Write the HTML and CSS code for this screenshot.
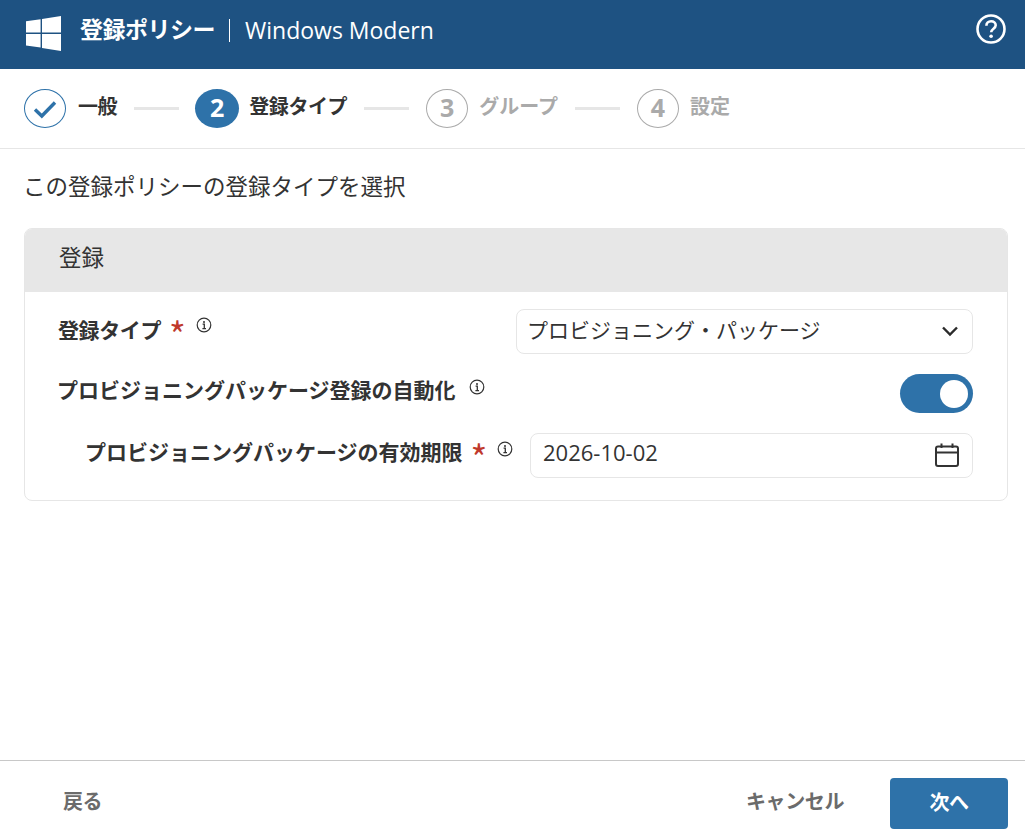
FILE: index.html
```html
<!DOCTYPE html>
<html lang="ja">
<head>
<meta charset="utf-8">
<title>登録ポリシー</title>
<link rel="stylesheet" href="styles.css">
</head>
<body>
<div class="page">
  <header class="topbar">
    <svg class="logo" width="35" height="35" viewBox="0 0 35 35"><path fill="#fff" d="M0 5.300 14.600 3.200V16.600H0ZM16 3 35 0V16.600H16ZM0 18H14.600V31.600L0 29.600ZM16 18H35V35L16 31.900Z"/></svg>
    <span class="topbar-title">登録ポリシー</span>
    <span class="topbar-sub">Windows Modern</span>
    <svg class="help" width="30" height="30" viewBox="0 0 30 30" fill="none"><circle cx="15" cy="15" r="13.500" stroke="#fff" stroke-width="2.600"/><path d="M10.400 11.700c0-2.700 2-4.400 4.700-4.400s4.600 1.700 4.600 4c0 3.400-4.500 3.400-4.500 7" stroke="#fff" stroke-width="2.600"/><circle cx="15.100" cy="22.300" r="1.800" fill="#fff"/></svg>
  </header>

  <nav class="stepper">
    <div class="step">
      <span class="badge badge-done"><svg width="26" height="20" viewBox="0 0 26 20" fill="none"><path d="M3 10.500 9.800 17 23 3.500" stroke="#2e72a9" stroke-width="3.400"/></svg></span>
      <span class="step-label step-label-first">一般</span>
    </div>
    <span class="connector"></span>
    <div class="step">
      <span class="badge badge-active">2</span>
      <span class="step-label">登録タイプ</span>
    </div>
    <span class="connector"></span>
    <div class="step">
      <span class="badge badge-todo">3</span>
      <span class="step-label step-label-todo">グループ</span>
    </div>
    <span class="connector"></span>
    <div class="step">
      <span class="badge badge-todo">4</span>
      <span class="step-label step-label-todo">設定</span>
    </div>
  </nav>

  <main class="content">
    <h2 class="lead">この登録ポリシーの登録タイプを選択</h2>
    <section class="card">
      <h3 class="card-head">登録</h3>
      <div class="card-body">
        <div class="row row-type">
          <div class="label"><b>登録タイプ</b><span class="req">*</span><svg class="info" width="16" height="16" viewBox="0 0 16 16" fill="none"><circle cx="8" cy="8" r="6.800" stroke="#333" stroke-width="1.200"/><path d="M6.600 7.200H8.300V11.600M6.400 11.600H10" stroke="#333" stroke-width="1.300"/><circle cx="8" cy="4.900" r="1" fill="#333"/></svg></div>
          <div class="field field-select">
            <span>プロビジョニング・パッケージ</span>
            <svg width="18" height="12" viewBox="0 0 18 12" fill="none"><path d="M2 2.500 9 9.500 16 2.500" stroke="#2b2b2b" stroke-width="2.400"/></svg>
          </div>
        </div>
        <div class="row row-auto">
          <div class="label"><b>プロビジョニングパッケージ登録の自動化</b><svg class="info" width="16" height="16" viewBox="0 0 16 16" fill="none"><circle cx="8" cy="8" r="6.800" stroke="#333" stroke-width="1.200"/><path d="M6.600 7.200H8.300V11.600M6.400 11.600H10" stroke="#333" stroke-width="1.300"/><circle cx="8" cy="4.900" r="1" fill="#333"/></svg></div>
          <span class="toggle"><span class="knob"></span></span>
        </div>
        <div class="row row-expiry">
          <div class="label"><b>プロビジョニングパッケージの有効期限</b><span class="req">*</span><svg class="info" width="16" height="16" viewBox="0 0 16 16" fill="none"><circle cx="8" cy="8" r="6.800" stroke="#333" stroke-width="1.200"/><path d="M6.600 7.200H8.300V11.600M6.400 11.600H10" stroke="#333" stroke-width="1.300"/><circle cx="8" cy="4.900" r="1" fill="#333"/></svg></div>
          <div class="field field-date">
            <span>2026-10-02</span>
            <svg width="26" height="26" viewBox="0 0 26 26" fill="none"><rect x="2" y="4.500" width="22" height="19.500" rx="2" stroke="#333" stroke-width="2"/><path d="M2 10.500H24M7.500 1.500V6M18.500 1.500V6" stroke="#333" stroke-width="2"/></svg>
          </div>
        </div>
      </div>
    </section>
  </main>

  <footer class="footer">
    <button class="btn btn-text btn-back">戻る</button>
    <div class="footer-right">
      <button class="btn btn-text btn-cancel">キャンセル</button>
      <button class="btn btn-primary">次へ</button>
    </div>
  </footer>
</div>
</body>
</html>
```
FILE: styles.css
```css
* { box-sizing: border-box; }
html, body { margin: 0; height: 100%; }
body { font-family: "Open Sans", "Noto Sans CJK JP", sans-serif; color: #333; background: #fff; }
.page { display: flex; flex-direction: column; height: 831px; width: 1025px; overflow: hidden; }

.topbar { height: 69px; background: #1e5282; color: #fff; display: flex; align-items: center; padding: 0 19px 9px 26px; flex: none; }
.logo { flex: none; margin: 7px 19px 0 0; }
.topbar-title { font-size: 23px; font-weight: 700; line-height: 30px; letter-spacing: -0.5px; padding: 0 14px 2px 0; border-right: 1px solid #fff; height: 23px; display: flex; align-items: center; }
.topbar-sub { font-size: 23px; line-height: 30px; margin-left: 15px; }
.help { margin-left: auto; margin-top: -3px; }

.stepper { height: 80px; border-bottom: 1px solid #e6e6e6; display: flex; align-items: center; padding: 0 0 0 24px; flex: none; }
.step { display: flex; align-items: center; }
.badge { width: 42px; height: 39px; border-radius: 50%; display: flex; align-items: center; justify-content: center; font-size: 25px; font-weight: 700; padding-bottom: 3px; flex: none; }
.badge-done { border: 1px solid #2e72a9; padding-bottom: 0; }
.badge-active { background: #2e72a9; color: #fff; width: 44px; }
.badge-todo { border: 1px solid #aaa; color: #aaa; margin-left: 1px; }
.step-label { font-size: 20px; font-weight: 700; margin: -6px 0 0 10px; letter-spacing: -0.4px; color: #333; }
.step-label-first { margin-left: 12px; }
.step-label-todo { color: #aaa; letter-spacing: 0; margin-left: 11px; }
.connector { width: 45px; height: 3px; background: #e6e6e6; margin: 0 16px 0 17px; }

.content { flex: 1; padding: 22px 17px 0 24px; }
.lead { font-size: 22.500px; font-weight: 400; line-height: 32px; margin: 0 0 25px -1px; }
.card { border: 1px solid #e6e6e6; border-radius: 8px; height: 273px; overflow: hidden; }
.card-head { background: #e7e7e7; height: 64px; margin: -1px -1px 0; padding: 0 0 7px 35px; display: flex; align-items: center; font-size: 22.500px; font-weight: 400; }
.card-body { padding: 17px 34px 0 33px; display: flex; flex-direction: column; }
.row { display: flex; align-items: center; justify-content: space-between; }
.row-type { height: 45px; }
.row-auto { height: 39px; margin-top: 20px; }
.row-expiry { height: 45px; margin-top: 20px; padding-left: 27px; }
.label { display: flex; align-items: center; font-size: 21px; margin-top: -4px; }
.row-auto .label { margin: -8px 0 0 -1px; }
.row-expiry .label { margin-top: -8px; }
.label b { font-weight: 700; line-height: 28px; }
.row-type b { letter-spacing: -0.4px; }
.req { color: #c0392b; font-size: 36px; font-weight: 400; margin-left: 8px; line-height: 28px; font-family: "Noto Sans CJK JP", sans-serif; padding-top: 6px; }
.row-expiry .req { padding-top: 8px; }
.info { margin: -10px 0 0 10px; flex: none; }
.row-auto .info { margin-top: -6px; margin-left: 13px; }
.row-expiry .info { margin-top: -6px; }
.field { height: 45px; border: 1px solid #e6e6e6; border-radius: 8px; display: flex; align-items: center; justify-content: space-between; font-size: 21px; }
.field span { margin-top: -6px; }
.field svg { margin-top: -2px; }
.field-select { width: 457px; padding: 0 13px 0 10px; }
.field-date { width: 443px; padding: 0 12px 0 12px; font-size: 22px; }
.field-date span { margin-top: -8px; }
.toggle { width: 73px; height: 39px; border-radius: 20px; background: #2e72a9; display: flex; align-items: center; justify-content: flex-end; padding-right: 5px; }
.knob { width: 28px; height: 28px; border-radius: 50%; background: #fff; }

.footer { height: 71px; border-top: 1px solid #c8c8c8; display: flex; align-items: center; justify-content: space-between; padding: 14px 17px 0 63px; flex: none; }
.footer-right { display: flex; align-items: center; gap: 46px; }
.btn { font-family: inherit; font-size: 20px; font-weight: 700; border: 0; background: none; padding: 0 0 4px; letter-spacing: -0.4px; }
.btn-text { color: #6b6b6b; padding-bottom: 6px; }
.btn-primary { width: 118px; height: 51px; background: #2e72a9; color: #fff; border-radius: 4px; }
```
